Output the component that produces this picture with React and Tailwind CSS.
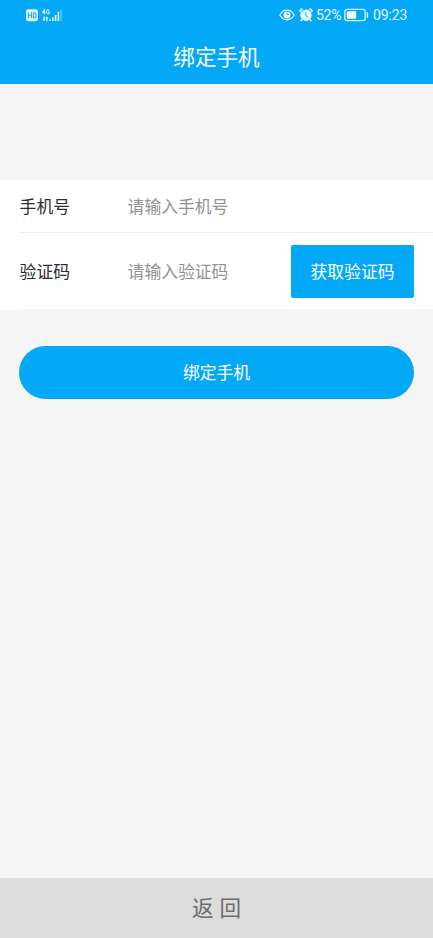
function NetworkIcons() {
  return (
    <svg className="h-[30px] w-[40px]" viewBox="0 0 40 30" fill="#e3f8ff">
      <rect x="1" y="9.3" width="12" height="12" rx="2.4" />
      <g fill="none" stroke="#18a9ef" strokeWidth="1.1">
        <path d="M3.6 12.3v6M6.5 12.3v6M3.6 15.3h2.9" />
        <path d="M8.4 12.8h.8q1.8 0 1.8 2.5t-1.8 2.5h-.8z" />
      </g>
      <g fill="none" stroke="#e3f8ff" strokeWidth="1">
        <path d="M19.3 14.3V9.3L17.4 12.7H20.6" />
        <path d="M24.2 10q-2.7-1-2.7 1.8t2.7 1.9v-1.9H23" />
      </g>
      <path d="M18.4 16.5h1.3v3h.9L19 21.2l-1.5-1.7h.9zM21.2 21.2h1.3v-3h.9l-1.6-1.7-1.5 1.7h.9z" />
      <rect x="24.2" y="19.2" width="1.6" height="1.8" />
      <rect x="27" y="17.2" width="1.6" height="3.8" />
      <rect x="29.8" y="14.8" width="1.6" height="6.2" />
      <rect x="32.6" y="11.8" width="1.6" height="9.2" />
      <rect x="35.4" y="10" width="1.5" height="11" opacity="0.4" />
    </svg>
  );
}

function EyeIcon() {
  return (
    <svg className="h-[12px] w-[16px] shrink-0" viewBox="0 0 16 12" fill="none" stroke="#e3f8ff">
      <path d="M.8 6Q3.6 1.2 8 1.2T15.2 6Q12.4 10.8 8 10.8T.8 6Z" strokeWidth="1.3" />
      <circle cx="8" cy="6" r="3.5" fill="#e3f8ff" stroke="none" />
      <path d="M8 3.8v1.7h1.9" stroke="#18a9ef" strokeWidth="0.9" />
    </svg>
  );
}

function AlarmIcon() {
  return (
    <svg className="ml-[4px] h-[14px] w-[14px] shrink-0" viewBox="0 0 14 14" fill="none" stroke="#e3f8ff">
      <circle cx="7" cy="7.3" r="5.7" fill="#e3f8ff" stroke="none" />
      <path d="M.8 4Q1 1.4 3.7 1.1M13.2 4Q13 1.4 10.3 1.1M3 11.5l-1.4 1.7M11 11.5l1.4 1.7" strokeWidth="1.5" />
      <path d="M6.8 4.3v3.3l2.3 1.7" stroke="#18a9ef" strokeWidth="1" />
    </svg>
  );
}

function BatteryIcon() {
  return (
    <svg className="h-[14px] w-[25px] shrink-0" viewBox="0 0 25 14" fill="none">
      <rect x="0.8" y="1.3" width="20.4" height="11.4" rx="2.4" stroke="#d5f3ff" strokeWidth="1.3" />
      <rect x="2.8" y="3.2" width="9.4" height="7.6" rx="0.8" fill="#f2fcff" />
      <rect x="22.6" y="4.3" width="1.5" height="5.4" rx="0.6" fill="#d5f3ff" />
    </svg>
  );
}

function StatusBar() {
  return (
    <div className="flex h-[30px] items-center pl-[25px] pr-[19px] font-['Roboto',sans-serif] text-[14px] text-[#e3f8ff]">
      <NetworkIcons />
      <div className="ml-auto flex items-center">
        <EyeIcon />
        <AlarmIcon />
        <span className="ml-[3px] w-[28px] whitespace-nowrap pt-px tracking-[-0.3px]">52%</span>
        <BatteryIcon />
        <span className="ml-[4px] w-[41px] whitespace-nowrap pt-px tracking-[-0.1px]">09:23</span>
      </div>
    </div>
  );
}

export default function App() {
  return (
    <div className="flex h-[938px] w-[433px] flex-col overflow-hidden bg-[#f5f5f5] font-['Noto_Sans_CJK_SC',sans-serif] text-[16.8px]">
      <header className="h-[84px] shrink-0 bg-[#03a9f6]">
        <StatusBar />
        <h1 className="flex h-[52px] items-center justify-center text-[21.6px] leading-none text-white">绑定手机</h1>
      </header>
      <main className="flex-1 pt-[96px]">
        <section className="bg-white">
          <div className="ml-[19px] flex h-[53px] items-center border-b border-[#eeeeee] pl-[0.6px] pt-[2px]">
            <label className="w-[108px] text-[#2c2c2c]">手机号</label>
            <span className="text-[#929292]">请输入手机号</span>
          </div>
          <div className="flex h-[77px] items-center pl-[19.6px] pr-[19px]">
            <label className="w-[108px] text-[#2c2c2c]">验证码</label>
            <span className="text-[#929292]">请输入验证码</span>
            <button className="ml-auto h-[53px] w-[123px] rounded-[2px] bg-[#03a9f6] text-white">获取验证码</button>
          </div>
          <div className="-mt-px ml-[19px] h-px bg-[#f5f5f5]" />
        </section>
        <div className="px-[19px] pt-[36px]">
          <button className="h-[53px] w-full rounded-full bg-[#03a9f6] text-white">绑定手机</button>
        </div>
      </main>
      <footer className="flex h-[60px] shrink-0 items-center justify-center bg-[#dcdcdc] pb-[2px] text-[21.6px] text-[#6c6c6c] [word-spacing:1px]">
        返 回
      </footer>
    </div>
  );
}
